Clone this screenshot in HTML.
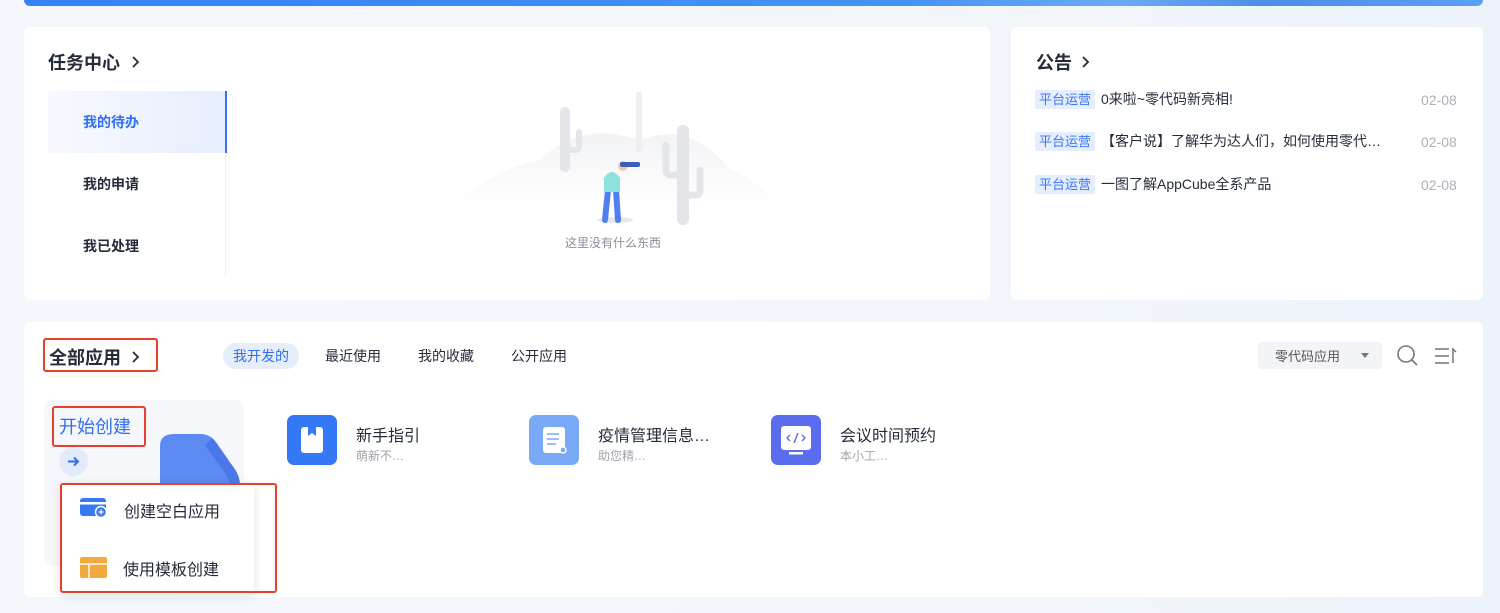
<!DOCTYPE html>
<html><head><meta charset="utf-8"><style>
*{margin:0;padding:0;box-sizing:border-box}
body{width:1500px;height:613px;overflow:hidden;background:linear-gradient(90deg,#f4f7fb,#f2f6fb 70%,#edf3fb);font-family:"Liberation Sans","Noto Sans CJK SC",sans-serif;color:#252b3a;position:relative}
.a{position:absolute}
.card{position:absolute;background:#fff;border-radius:6px}
.t{position:absolute;white-space:nowrap}
.tag{position:absolute;left:1035px;background:#e5eeff;color:#3b76f6;font-size:13px;line-height:19px;padding:0 4px;border-radius:2px}
.nt{position:absolute;left:1101px;font-size:14px;color:#252b3a;line-height:18px}
.dt{position:absolute;left:1421px;font-size:14px;color:#adb0b8;line-height:18px}
.red{position:absolute;border:2px solid #e8402c;border-radius:3px}
.ic{position:absolute;width:50px;height:50px;border-radius:7px}
.an{position:absolute;font-size:16px;color:#252b3a}
.as{position:absolute;font-size:12px;color:#a0a3ab}
.chev{position:absolute}
</style></head><body>
<div class="a" style="left:24px;top:0;width:1459px;height:6px;border-radius:0 0 6px 6px;background:linear-gradient(90deg,#3681f6,#4592f4 60%,#6aaaf5 75%,#4c8ee8 85%,#5aa0f6)"></div>

<div class="card" style="left:24px;top:27px;width:966px;height:273px"></div>
<div class="t" style="left:48px;top:49px;font-size:18px;font-weight:bold;color:#252b3a">任务中心</div>
<svg class="chev" style="left:131px;top:55px" width="10" height="14"><path d="M2 2l5 5-5 5" stroke="#252b3a" stroke-width="1.8" fill="none"/></svg>
<div class="a" style="left:48px;top:91px;width:179px;height:62px;background:linear-gradient(90deg,#f7f9fe,#e7eefd);border-right:2px solid #3371f5"></div>
<div class="a" style="left:225px;top:153px;width:1px;height:124px;background:#f0f1f4"></div>
<div class="t" style="left:83px;top:112px;font-size:14px;font-weight:bold;color:#2f6ef5">我的待办</div>
<div class="t" style="left:83px;top:174px;font-size:14px;font-weight:bold">我的申请</div>
<div class="t" style="left:83px;top:236px;font-size:14px;font-weight:bold">我已处理</div>
<svg class="a" style="left:430px;top:80px" width="380" height="160" viewBox="0 0 380 160">
<defs><linearGradient id="h" x1="0" y1="0" x2="0" y2="1"><stop offset="0" stop-color="#f2f3f5"/><stop offset="1" stop-color="#fff"/></linearGradient></defs>
<path d="M20 130 Q60 90 110 80 Q150 40 210 60 Q260 40 300 90 Q330 100 350 130 Z" fill="url(#h)"/>
<rect x="130" y="27" width="10" height="65" rx="5" fill="#e4e5e8"/><path d="M140 70 h5 q4 0 4 -4 v-14" stroke="#e4e5e8" stroke-width="6" fill="none" stroke-linecap="round"/>
<rect x="206" y="12" width="6" height="60" rx="3" fill="#eeeff1"/>
<rect x="247" y="45" width="12" height="100" rx="6" fill="#e4e5e8"/><path d="M247 95 h-6 q-5 0 -5 -5 v-25 M259 115 h6 q5 0 5 -5 v-20" stroke="#e4e5e8" stroke-width="7" fill="none" stroke-linecap="round"/>
<ellipse cx="185" cy="140" rx="18" ry="3" fill="#e6e8ec"/>
<path d="M178 110 l-3 30 M186 110 l2 30" stroke="#4f7ff0" stroke-width="6" stroke-linecap="round"/>
<path d="M174 98 q8 -12 16 0 v14 h-16 z" fill="#8ee0dc"/>
<circle cx="193" cy="86" r="5" fill="#f3c9a8"/><rect x="190" y="82" width="20" height="5" rx="2" fill="#3b5fb9"/>
</svg>
<div class="t" style="left:565px;top:234px;font-size:12px;color:#8a8e99">这里没有什么东西</div>

<div class="card" style="left:1011px;top:27px;width:472px;height:273px"></div>
<div class="t" style="left:1036px;top:49px;font-size:18px;font-weight:bold">公告</div>
<svg class="chev" style="left:1081px;top:55px" width="10" height="14"><path d="M2 2l5 5-5 5" stroke="#252b3a" stroke-width="1.8" fill="none"/></svg>
<div class="tag" style="top:90px">平台运营</div><div class="nt" style="top:90px">0来啦~零代码新亮相!</div><div class="dt" style="top:91px">02-08</div>
<div class="tag" style="top:132px">平台运营</div><div class="nt" style="top:132px">【客户说】了解华为达人们，如何使用零代…</div><div class="dt" style="top:133px">02-08</div>
<div class="tag" style="top:175px">平台运营</div><div class="nt" style="top:175px">一图了解AppCube全系产品</div><div class="dt" style="top:176px">02-08</div>

<div class="card" style="left:24px;top:322px;width:1459px;height:275px"></div>
<div class="t" style="left:49px;top:344px;font-size:18px;font-weight:bold">全部应用</div>
<svg class="chev" style="left:131px;top:350px" width="10" height="14"><path d="M2 2l5 5-5 5" stroke="#252b3a" stroke-width="1.8" fill="none"/></svg>
<div class="red" style="left:43px;top:338px;width:115px;height:34px"></div>
<div class="a" style="left:223px;top:343px;width:76px;height:26px;border-radius:13px;background:#e6eefc"></div>
<div class="t" style="left:233px;top:346px;font-size:14px;color:#2f6ef5">我开发的</div>
<div class="t" style="left:325px;top:346px;font-size:14px">最近使用</div>
<div class="t" style="left:418px;top:346px;font-size:14px">我的收藏</div>
<div class="t" style="left:511px;top:346px;font-size:14px">公开应用</div>
<div class="a" style="left:1258px;top:342px;width:124px;height:27px;border-radius:3px;background:#f3f4f7"></div>
<div class="t" style="left:1275px;top:346px;font-size:13px;color:#555">零代码应用</div>
<div class="a" style="left:1361px;top:353px;border:4px solid transparent;border-top:5px solid #777"></div>
<svg class="a" style="left:1396px;top:344px" width="24" height="24"><circle cx="10" cy="10" r="8" stroke="#777" stroke-width="1.6" fill="none"/><path d="M16 16l5 5" stroke="#777" stroke-width="1.6"/></svg>
<svg class="a" style="left:1434px;top:346px" width="24" height="20"><path d="M1 3h14M1 10h14M1 17h14M19 17V3l3 3" stroke="#777" stroke-width="1.5" fill="none"/></svg>

<div class="a" style="left:44px;top:400px;width:200px;height:166px;border-radius:8px;background:#f5f7fb;overflow:hidden">
<svg class="a" style="left:108px;top:30px" width="92" height="110"><path d="M8 16 q0-12 14-12 h26 q10 0 16 8 l18 26 q6 8 6 18 v50 h-80z" fill="#5d8bf3"/><path d="M60 8 l22 30 q6 8 6 18 v50 h-10 v-48 q0-8-5-15 l-20-28z" fill="#4a78e8"/></svg>
</div>
<div class="t" style="left:59px;top:413px;font-size:18px;color:#2f6ef5">开始创建</div>
<div class="red" style="left:52px;top:406px;width:94px;height:41px"></div>
<div class="a" style="left:59px;top:447px;width:29px;height:29px;border-radius:50%;background:#e3eafa"></div>
<svg class="a" style="left:66px;top:454px" width="15" height="15"><path d="M2 7.5h10M8 3.5l4 4-4 4" stroke="#2f6ef5" stroke-width="2" fill="none"/></svg>

<div class="a" style="left:60px;top:483px;width:194px;height:111px;background:#fff;border-radius:6px;box-shadow:0 2px 10px rgba(0,0,0,.12)"></div>
<div class="red" style="left:60px;top:483px;width:217px;height:110px"></div>
<svg class="a" style="left:80px;top:497px" width="28" height="22"><rect x="0" y="1" width="26" height="18" rx="3" fill="#3a78f2"/><rect x="0" y="5" width="26" height="2.5" fill="#fff"/><circle cx="21" cy="15" r="5.5" fill="#3a78f2" stroke="#fff" stroke-width="1.5"/><path d="M21 12.5v5M18.5 15h5" stroke="#fff" stroke-width="1.3"/></svg>
<div class="t" style="left:124px;top:498px;font-size:16px">创建空白应用</div>
<svg class="a" style="left:80px;top:557px" width="27" height="21"><rect width="27" height="21" rx="2" fill="#f3a93d"/><path d="M0 7h27M9 7v14" stroke="#fff" stroke-width="1.5"/></svg>
<div class="t" style="left:123px;top:556px;font-size:16px">使用模板创建</div>

<div class="ic" style="left:287px;top:415px;background:#3478f6"></div>
<svg class="a" style="left:287px;top:415px" width="50" height="50"><rect x="14" y="12" width="22" height="26" rx="3" fill="#fff"/><path d="M21 12v9l4-3 4 3v-9z" fill="#3478f6"/></svg>
<div class="an" style="left:356px;top:422px">新手指引</div><div class="as" style="left:356px;top:447px">萌新不…</div>
<div class="ic" style="left:529px;top:415px;background:#7aaaf7"></div>
<svg class="a" style="left:529px;top:415px" width="50" height="50"><rect x="14" y="12" width="22" height="26" rx="3" fill="#fff"/><path d="M18 19h12M18 24h12M18 29h9" stroke="#7aaaf7" stroke-width="1.6"/><circle cx="34" cy="35" r="3" fill="#7aaaf7" stroke="#fff" stroke-width="1.5"/></svg>
<div class="an" style="left:598px;top:422px">疫情管理信息…</div><div class="as" style="left:598px;top:447px">助您精…</div>
<div class="ic" style="left:771px;top:415px;background:#5a6def"></div>
<svg class="a" style="left:771px;top:415px" width="50" height="50"><rect x="10" y="11" width="30" height="24" rx="3" fill="#fff"/><path d="M19 20l-3 3 3 3M31 20l3 3-3 3M27 18l-4 10" stroke="#5a6def" stroke-width="1.4" fill="none"/><rect x="18" y="37" width="14" height="2.5" fill="#fff"/></svg>
<div class="an" style="left:840px;top:422px">会议时间预约</div><div class="as" style="left:840px;top:447px">本小工…</div>
</body></html>
